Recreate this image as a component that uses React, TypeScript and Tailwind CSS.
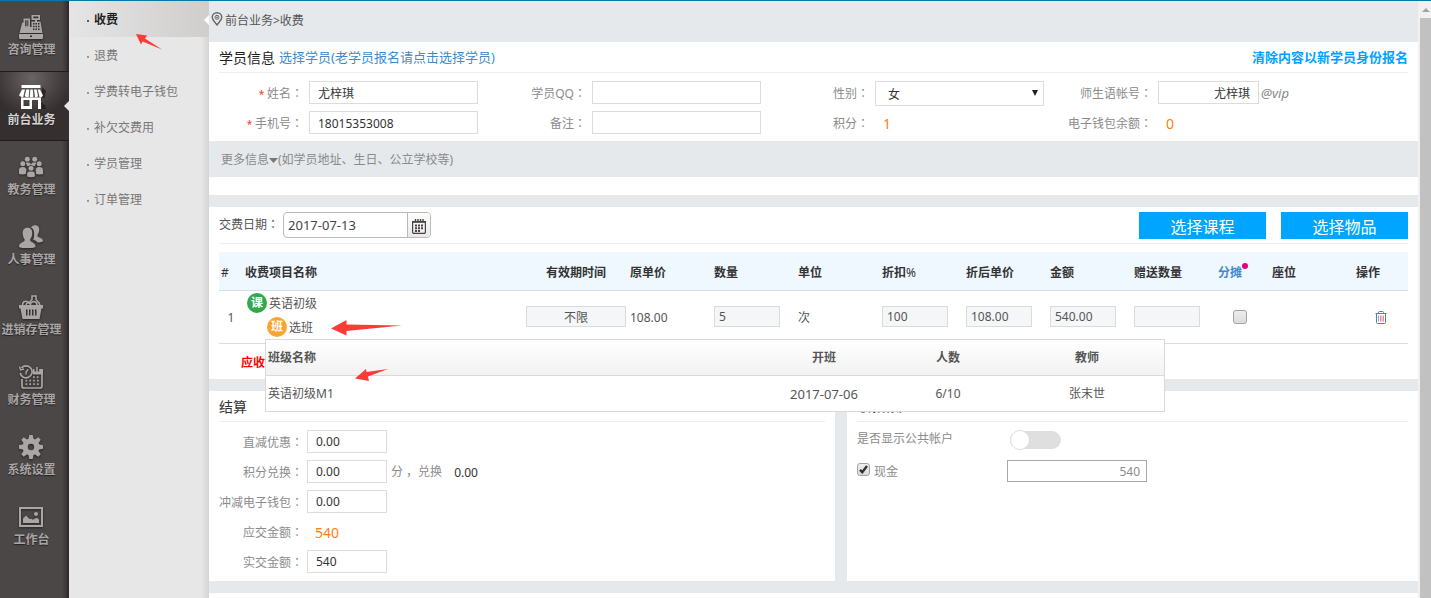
import type { ReactNode } from 'react';

const RegisterIcon = () => (
  <svg viewBox="0 0 24 24" className="size-6" fill="currentColor">
    <path fillRule="evenodd" d="M12.500 0H21v5h-3v2h-2V5h-3.500zM14.300 1.600v1.700h5V1.600z" />
    <path fillRule="evenodd" d="M4.500 3.500H11V12h1.500V6.500h9L23.500 18H.5L3.200 7.500h1.300zM6.200 5.200v6h1.300v-6zM8.300 5.200v6h1v-6zM14 8v1.500h1.500V8zM16.500 8v1.500H18V8zM19 8v1.500h1.500V8zM14 10.800v1.500h1.500v-1.500zM16.500 10.800v1.500H18v-1.500zM19 10.800v1.500h1.500v-1.500zM14 13.600v1.500h1.500v-1.500zM16.500 13.600v1.500H18v-1.500zM19 13.600v1.500h1.500v-1.500z" />
    <path fillRule="evenodd" d="M0 19h24v4a1 1 0 0 1-1 1H1a1 1 0 0 1-1-1zM11 20.500V22h2v-1.500z" />
  </svg>
);

const StoreIcon = () => (
  <svg viewBox="0 0 24 24" className="size-6 overflow-visible">
    <path d="M23 2l4 4-1.500 7-3 0v4l4 4v3h-4z" fill="#1f1a1a" opacity=".75" />
    <g fill="currentColor">
      <path d="M2.500 0h19v3h-19z" />
      <path d="M3 4.500h3L4.200 12H2.500L0 10.500zM7.300 4.500h3L9.700 12H7L5.700 11zM11.400 4.500h2.400l.6 7-1 .8h-2l-.7-.8zM15 4.500h2.700l1.300 6.500-1 1.200h-2zM18.800 4.500H21l3 6-1.500 1.700h-2z" />
      <path fillRule="evenodd" d="M2 12.500h20V24H2zM4.500 15h6v6h-6zM13 15h6v9h-6z" />
    </g>
  </svg>
);

const PeopleIcon = () => (
  <svg viewBox="0 0 24 24" className="size-6" fill="currentColor">
    <circle cx="8.300" cy="4.300" r="2.500" />
    <circle cx="15.700" cy="4.300" r="2.500" />
    <path d="M6.700 7.500h3.500l1.800 1.700 1.800-1.700h3.500l-1 2.500-.8 1.300-1.300-.3a3.400 3.400 0 0 0-4.400 0l-1.300.3-.8-1.300z" />
    <circle cx="3.800" cy="8.700" r="2.500" />
    <circle cx="20.200" cy="8.700" r="2.500" />
    <path d="M0 19v-3.500c0-2 1-3.500 3.800-3.500s3.300 1.500 3.500 3L6.800 19c-2 .6-5 .6-6.800 0zM24 19v-3.500c0-2-1-3.500-3.800-3.500s-3.300 1.500-3.500 3l.5 4c2 .6 5 .6 6.800 0z" />
    <circle cx="12" cy="13.200" r="2.500" />
    <path d="M8.200 21.500V19c0-2 1.200-2.500 3.800-2.500s3.800.5 3.800 2.500v2.500c-2 1-5.600 1-7.600 0z" />
  </svg>
);

const UsersIcon = () => (
  <svg viewBox="0 0 24 24" className="size-6" fill="currentColor">
    <path d="M12 2.500C13 1 14.300.3 16 .3c3.300 0 4.500 2.300 4.200 5.200-.2 2-.9 3.200-1.700 4.200v1.800l4 2c1.200.7 1.500 1.500 1.500 2.800-1 .8-3.500 1.200-5.500 1.300-.8-1.200-2-2-3.400-2.500l-1-.5c.8-1.200 1-2.800 1-4.700.4-3.500-.7-6.500-3.100-7.400z" />
    <path d="M8.500 2.800c3.700 0 5 2.600 4.700 6.100-.2 2.200-1 4-2 5.100v2l3.600 2.300c1.200.7 1.700 2 1.700 3.600-2.500 1.600-14 1.600-16.500 0 0-1.600.5-2.900 1.700-3.600L5.500 16v-2c-1-1.100-1.600-2.900-1.800-5.100-.3-3.500 1.100-6.100 4.800-6.100z" />
  </svg>
);

const BasketIcon = () => (
  <svg viewBox="0 0 24 24" className="size-6">
    <path d="M3.500 10c0-3 2.500-4.500 5-3.300L12 10M11 8.500V6.500l2-2V1h4v3.500l1.500 2c1.500 1 2.500 2 2.200 4" fill="none" stroke="currentColor" strokeWidth="1.600" />
    <path d="M7 10c.5-2.500 3-3.500 5-2 2-2.500 6-1.500 6 2.500" fill="none" stroke="currentColor" strokeWidth="1.600" />
    <path fill="currentColor" fillRule="evenodd" d="M0 10h24v3.500h-1.500L20.500 24h-17L1.500 13.500H0zM7 14.500v6h1.500v-6zM10 14.500v6h1.500v-6zM13 14.500v6h1.500v-6zM16 14.500v6h1.500v-6z" />
  </svg>
);

const ClockCalendarIcon = () => (
  <svg viewBox="0 0 24 24" className="size-6" fill="none" stroke="currentColor">
    <path strokeWidth="1.700" d="M3 14v7a2 2 0 0 0 2 2h16a2 2 0 0 0 2-2V6" />
    <path fill="currentColor" stroke="none" d="M14 4h1.500v2.500h1.700V2h1.500v4.500h1.500V4H24v5.500H14z" />
    <path d="M2.500 3A6 6 0 1 1 1.200 8" strokeWidth="1.700" />
    <path strokeWidth="1.400" d="M.5 1.500L1.500 5 5 4M7 9.500V7l2.200-2.700" />
    <path strokeWidth="1.700" strokeDasharray="1.700 2.100" d="M14 12.200h7M6.500 15.700h14M6.500 19.200h14" />
  </svg>
);

const TEETH = ['rotate(0 12 12)', 'rotate(45 12 12)', 'rotate(90 12 12)', 'rotate(135 12 12)', 'rotate(180 12 12)', 'rotate(225 12 12)', 'rotate(270 12 12)', 'rotate(315 12 12)'];

const GearIcon = () => (
  <svg viewBox="0 0 24 24" className="size-6" fill="currentColor">
    {TEETH.map((t) => (
      <path key={t} transform={t} d="M10.300 0h3.400l1 5h-5.400z" />
    ))}
    <path fillRule="evenodd" d="M12 3.500a8.500 8.500 0 1 0 0 17 8.500 8.500 0 0 0 0-17zm0 5.300a3.200 3.200 0 1 1 0 6.400 3.200 3.200 0 0 1 0-6.400z" />
  </svg>
);

const PictureIcon = () => (
  <svg viewBox="0 0 24 24" className="size-6" fill="currentColor">
    <path fillRule="evenodd" d="M0 2h24v20H0zM2 4v16h20V4z" />
    <path d="M4 18v-4.500L7 10.500l3.500 3.500 1.500-.3 2 1 3.500-2 2.500 1.800V18z" />
    <circle cx="17" cy="9" r="2" />
  </svg>
);

const PinIcon = () => (
  <svg viewBox="0 0 12 14" className="mt-px h-3.5 w-3 shrink-0" fill="none" stroke="#666">
    <path strokeWidth="1.400" d="M6 13C4.500 10.500 1.200 8.300 1.200 5.300a4.800 4.600 0 0 1 9.600 0C10.800 8.300 7.500 10.500 6 13z" />
    <circle cx="6" cy="5.300" r="2" />
    <circle cx="6" cy="5.300" r=".5" />
  </svg>
);

const CalendarIcon = () => (
  <svg viewBox="0 0 14 15" className="h-[15px] w-3.5" stroke="#4a4340">
    <path fill="none" strokeWidth="1.200" d="M.6 2.600h12.800v10.300a1.500 1.500 0 0 1-1.500 1.500H2.100a1.500 1.500 0 0 1-1.500-1.500z" />
    <path strokeWidth="1.400" d="M1 3h12M3.500 0v3M6 0v3M8.500 0v3M11 0v3" />
    <path stroke="none" fill="#4a4340" d="M6 5.500h2v2H6zM9 5.500h2v2H9zM3 5.500h2v2H3zM3 8.300h2v2H3zM6 8.300h2v2H6zM9 8.300h2v2H9zM3 11h2v2H3zM6 11h2v2H6z" />
  </svg>
);

const TrashIcon = () => (
  <svg viewBox="0 0 12 13" className="mt-0.5 h-[13px] w-3" fill="none">
    <path stroke="#3f86c0" d="M.5 2.500h11M3.500 2.500v-1a1 1 0 0 1 1-1h3a1 1 0 0 1 1 1v1M1.500 3v8.500a1 1 0 0 0 1 1h7a1 1 0 0 0 1-1V3" />
    <path stroke="#e58d98" d="M3.500 4.500v6M5.500 4.500v6M7 4.500v6M8.500 4.500v6" />
  </svg>
);

const NAV: { label: string; icon: ReactNode; active?: boolean }[] = [
  { label: '咨询管理', icon: <RegisterIcon /> },
  { label: '前台业务', icon: <StoreIcon />, active: true },
  { label: '教务管理', icon: <PeopleIcon /> },
  { label: '人事管理', icon: <UsersIcon /> },
  { label: '进销存管理', icon: <BasketIcon /> },
  { label: '财务管理', icon: <ClockCalendarIcon /> },
  { label: '系统设置', icon: <GearIcon /> },
  { label: '工作台', icon: <PictureIcon /> },
];

const SUBNAV = ['收费', '退费', '学费转电子钱包', '补欠交费用', '学员管理', '订单管理'];

const LABEL = 'w-[84px] shrink-0 text-right leading-6 whitespace-nowrap text-[#8c8c8c]';
const BOX = 'h-[23px] border border-[#dcdcdc] bg-white px-2 pt-px text-[#333] outline-none';
const CELL_BOX = 'block h-[21px] border border-[#d9dbdd] bg-[#f4f6f8] px-1 text-[#555] outline-none';

/* Full-width colon centred in its cell */
const Colon = () => <span className="font-['Noto_Sans_CJK_TC']" lang="zh-TW">：</span>;

const Required = () => <span className="text-[10px] text-[#f33]">* </span>;

function Sidebar() {
  return (
    <nav className="w-[69px] shrink-0 bg-[linear-gradient(to_right,#4b4747_62px,#403c3c_65px,#2a2727_69px)]">
      {NAV.map(({ label, icon, active }) => (
        <a
          key={label}
          href="#"
          className={
            active
              ? 'relative block h-[70px] border-y border-[#211d1d] bg-[radial-gradient(ellipse_40px_38px_at_32px_6px,#6b6464,#352f2f)] pt-[13px] text-[#d6d3d3]'
              : 'block h-[70px] pt-3.5 text-[#aaa6a6]'
          }
        >
          <span className={active ? 'flex w-[62px] justify-center text-white' : 'flex w-[62px] justify-center drop-shadow-[0_1px_1px_#222]'}>{icon}</span>
          <span className="block w-[63px] text-center leading-[22px] font-bold whitespace-nowrap [text-shadow:0_1px_1px_#222]">{label}</span>
          {active && (
            <svg viewBox="0 0 5 10" className="absolute top-[29px] right-0 h-2.5 w-[5px]" fill="#e6e5e5">
              <path d="M5 0v10L0 5z" />
            </svg>
          )}
        </a>
      ))}
    </nav>
  );
}

function SubMenu() {
  return (
    <nav className="relative w-[140px] shrink-0 bg-[linear-gradient(to_right,#e8e7e7_132px,#d5d4d4_140px)]">
      {SUBNAV.map((label, i) => (
        <a
          key={label}
          href="#"
          className={
            i === 0
              ? 'relative flex h-9 items-center gap-[5px] bg-[linear-gradient(to_right,#e6e5e5,#cfcecd)] pt-0.5 pl-[18px] font-bold text-[#222]'
              : 'flex h-9 items-center gap-[5px] pt-0.5 pl-[18px] text-[#777]'
          }
        >
          <span className="mt-0.5 size-0.5 bg-current opacity-70" />
          {label}
          {i === 0 && (
            <svg viewBox="0 0 5 10" className="absolute top-3.5 right-0 h-2.5 w-[5px]" fill="#fff">
              <path d="M5 0v10L0 5z" />
            </svg>
          )}
        </a>
      ))}
      <svg viewBox="0 0 27 16" className="absolute top-[33px] left-[67px] h-4 w-[27px]" fill="#fb3b36">
        <path d="M0 0l11 1.500-2 3L26 15.500 6.500 7.500 5 10.500z" />
      </svg>
    </nav>
  );
}

function StudentPanel() {
  return (
    <section>
      <div className="bg-white px-2.5">
        <div className="flex h-[31px] items-center gap-1 border-b border-[#eee] pt-px">
          <h2 className="text-[14px] text-[#222]">学员信息</h2>
          <a href="#" className="pt-px text-[13px] text-[#428bca]">选择学员(老学员报名请点击选择学员)</a>
          <a href="#" className="ml-auto text-[13px] font-bold text-[#00a2ff]">清除内容以新学员身份报名</a>
        </div>
        <div className="grid auto-rows-[30px] grid-cols-4 pt-2 pr-[57px]">
          <div className="flex gap-1.5">
            <label htmlFor="name" className={LABEL}><Required />姓名<Colon /></label>
            <input id="name" defaultValue="尤梓琪" className={`${BOX} w-[169px]`} />
          </div>
          <div className="flex gap-1.5">
            <label htmlFor="qq" className={LABEL}>学员QQ<Colon /></label>
            <input id="qq" className={`${BOX} w-[169px]`} />
          </div>
          <div className="flex gap-1.5">
            <label htmlFor="gender" className={LABEL}>性别<Colon /></label>
            <div className="grid w-[169px] shrink-0">
              <select id="gender" defaultValue="女" className="col-start-1 row-start-1 h-[25px] appearance-none border border-[#dcdcdc] bg-white px-3 pt-0.5 text-[#333] outline-none">
                <option>女</option>
                <option>男</option>
              </select>
              <svg viewBox="0 0 6 6" className="pointer-events-none col-start-1 row-start-1 mt-[9px] mr-[6px] size-1.5 justify-self-end" fill="#222">
                <path d="M0 0h6L3 6z" />
              </svg>
            </div>
          </div>
          <div className="flex gap-1.5">
            <label htmlFor="account" className={LABEL}>师生语帐号<Colon /></label>
            <input id="account" defaultValue="尤梓琪" className={`${BOX} w-[101px] shrink-0 text-right`} />
            <span className="-ml-1 text-[13px] leading-6 text-[#888] italic">@vip</span>
          </div>
          <div className="flex gap-1.5">
            <label htmlFor="phone" className={LABEL}><Required />手机号<Colon /></label>
            <input id="phone" defaultValue="18015353008" className={`${BOX} w-[169px]`} />
          </div>
          <div className="flex gap-1.5">
            <label htmlFor="remark" className={LABEL}>备注<Colon /></label>
            <input id="remark" className={`${BOX} w-[169px]`} />
          </div>
          <div className="flex gap-1.5">
            <span className={LABEL}>积分<Colon /></span>
            <span className="pl-2 text-[14px] leading-[26px] text-[#ff7f0e]">1</span>
          </div>
          <div className="flex gap-1.5">
            <span className={LABEL}>电子钱包余额<Colon /></span>
            <span className="pl-2 text-[14px] leading-[26px] text-[#ff7f0e]">0</span>
          </div>
        </div>
      </div>
      <button type="button" className="flex h-9 w-full items-center px-3 pt-0.5 text-[#8a8a8a]">
        更多信息
        <svg viewBox="0 0 9 5" className="h-[5px] w-[9px]" fill="#777"><path d="M0 0h9L4.500 5z" /></svg>
        (如学员地址、生日、公立学校等)
      </button>
      <div className="h-[18px] bg-white" />
    </section>
  );
}

function ClassPopup() {
  return (
    <div className="absolute top-full left-0 z-10 w-[900px] border border-[#d9d9d9] bg-white">
      <table className="w-full table-fixed border-collapse text-[#555]">
        <colgroup>
          <col />
          <col className="w-[124px]" />
          <col className="w-[124px]" />
          <col className="w-[154px]" />
        </colgroup>
        <thead>
          <tr className="h-9 border-b border-[#d9d9d9] bg-linear-to-b from-white to-[#f2f2f2] [&>th]:pt-0.5">
            <th className="px-0.5 text-left">班级名称</th>
            <th>开班</th>
            <th>人数</th>
            <th>教师</th>
          </tr>
        </thead>
        <tbody>
          <tr className="h-[35px] text-center [&>td]:pt-0.5">
            <td className="px-0.5 text-left">英语初级M1</td>
            <td className="text-[13px]">2017-07-06</td>
            <td>6/10</td>
            <td>张末世</td>
          </tr>
        </tbody>
      </table>
      <svg viewBox="0 0 71 16" className="absolute -top-[20px] left-[65px] h-4 w-[71px]" fill="#fb3b36">
        <path d="M0 8.500L15.500 0v4.500L71 5.500 15.500 11v4.500z" />
      </svg>
      <svg viewBox="0 0 33 12" className="absolute top-[29px] left-[89px] h-3 w-[33px]" fill="#fb3b36">
        <path d="M0 9.500L11 0l.5 3L33 0 13 7.500 14 12z" />
      </svg>
    </div>
  );
}

function FeePanel() {
  return (
    <section className="bg-white px-2.5">
      <div className="flex h-[37px] items-start gap-1 border-b border-[#eee] pt-[5px]">
        <label htmlFor="date" className="leading-6 text-[#555]">交费日期<Colon /></label>
        <div className="flex h-[26px] w-[148px] overflow-hidden rounded-[4px] border border-[#bbb]">
          <input id="date" defaultValue="2017-07-13" className="w-[123px] px-1 pt-0.5 text-[13px] text-[#444] outline-none" />
          <button type="button" aria-label="选择日期" className="grid flex-1 place-items-center border-l border-[#bbb] bg-linear-to-b from-white to-[#e8e8e8] pt-0.5">
            <CalendarIcon />
          </button>
        </div>
        <button type="button" className="ml-auto h-[27px] w-[127px] bg-[#00a5ff] pt-0.5 text-[16px] text-white">选择课程</button>
        <button type="button" className="ml-[11px] h-[27px] w-[127px] bg-[#00a5ff] pt-0.5 text-[16px] text-white">选择物品</button>
      </div>
      <table className="mt-2 w-full table-fixed border-collapse text-[#555]">
        <colgroup>
          <col className="w-6" />
          <col />
          <col className="w-[104px]" />
          <col className="w-[84px]" />
          <col className="w-[84px]" />
          <col className="w-[84px]" />
          <col className="w-[84px]" />
          <col className="w-[84px]" />
          <col className="w-[84px]" />
          <col className="w-[84px]" />
          <col className="w-[54px]" />
          <col className="w-[84px]" />
          <col className="w-[54px]" />
        </colgroup>
        <thead>
          <tr className="h-[38px] border-b border-[#cfe0ea] bg-[#eff7ff] text-left text-[#333] [&>th]:px-0.5 [&>th]:pt-1">
            <th className="font-normal">#</th>
            <th>收费项目名称</th>
            <th className="text-center">有效期时间</th>
            <th>原单价</th>
            <th>数量</th>
            <th>单位</th>
            <th>折扣<span className="font-normal">%</span></th>
            <th>折后单价</th>
            <th>金额</th>
            <th>赠送数量</th>
            <th>
              <a href="#" className="relative text-[#428bca]">
                分摊
                <span className="absolute top-[-1px] left-full size-1.5 rounded-full bg-[#e5007d]" />
              </a>
            </th>
            <th>座位</th>
            <th>操作</th>
          </tr>
        </thead>
        <tbody>
          <tr className="h-[53px] border-b border-[#ddd] [&>td]:px-0.5">
            <td className="pt-0.5 text-center">1</td>
            <td className="align-top">
              <div className="flex h-6 items-center gap-0.5 pl-0.5">
                <span className="grid size-5 place-items-center rounded-full bg-[#32a84a] pt-px font-bold text-white">课</span>
                <span className="pt-0.5">英语初级</span>
              </div>
              <div className="relative ml-5 flex h-6 items-center gap-0.5 pl-0.5">
                <span className="grid size-5 place-items-center rounded-full bg-[#fba52f] pt-px font-bold text-white">班</span>
                <a href="#" className="pt-0.5">选班</a>
                <ClassPopup />
              </div>
            </td>
            <td><input aria-label="有效期时间" defaultValue="不限" className={`${CELL_BOX} w-full text-center`} /></td>
            <td className="pt-0.5">108.00</td>
            <td><input aria-label="数量" defaultValue="5" className={`${CELL_BOX} w-[66px]`} /></td>
            <td className="pt-0.5">次</td>
            <td><input aria-label="折扣%" defaultValue="100" className={`${CELL_BOX} w-[66px]`} /></td>
            <td><input aria-label="折后单价" defaultValue="108.00" className={`${CELL_BOX} w-[66px]`} /></td>
            <td><input aria-label="金额" defaultValue="540.00" className={`${CELL_BOX} w-[66px]`} /></td>
            <td><input aria-label="赠送数量" className={`${CELL_BOX} w-[66px]`} /></td>
            <td>
              <input type="checkbox" aria-label="分摊" className="ml-[15px] block size-3.5 appearance-none rounded-[3px] border border-[#a3a3a3] bg-linear-to-b from-[#eee] to-[#dcdcdc]" />
            </td>
            <td />
            <td>
              <button type="button" aria-label="删除" className="mx-auto block"><TrashIcon /></button>
            </td>
          </tr>
        </tbody>
      </table>
      <div className="flex h-[35px] items-center pt-1 pl-[22px] font-bold text-[#f00]">应收</div>
    </section>
  );
}

function Amount({ id, label, value, children }: { id: string; label: string; value: string; children?: ReactNode }) {
  return (
    <div className="flex h-[30px] gap-1">
      <label htmlFor={id} className={LABEL}>{label}<Colon /></label>
      <input id={id} defaultValue={value} className={`${BOX} w-20`} />
      {children}
    </div>
  );
}

function SettlementPanels() {
  return (
    <div className="flex gap-3">
      <section className="w-[626px] bg-white px-2.5 pb-px">
        <h2 className="flex h-[31px] items-center border-b border-[#eee] pt-0.5 text-[14px] text-[#333]">结算</h2>
        <div className="pt-2">
          <Amount id="cut" label="直减优惠" value="0.00" />
          <Amount id="points" label="积分兑换" value="0.00">
            <span className="leading-6 text-[#8c8c8c]">分 ，兑换</span>
            <span className="pl-2 leading-[26px] text-[#333]">0.00</span>
          </Amount>
          <Amount id="wallet" label="冲减电子钱包" value="0.00" />
          <div className="flex h-[30px] gap-1">
            <span className={LABEL}>应交金额<Colon /></span>
            <span className="pl-2 text-[14px] leading-[26px] text-[#ff7f0e]">540</span>
          </div>
          <Amount id="paid" label="实交金额" value="540" />
        </div>
      </section>
      <section className="flex-1 bg-white px-2.5">
        <h2 className="flex h-[31px] items-center border-b border-[#eee] text-[14px] text-[#333]">收款帐户</h2>
        <div className="grid auto-rows-[30px] grid-cols-[150px_1fr] pt-2 text-[#8c8c8c]">
          <label htmlFor="public" className="leading-[18px]">是否显示公共帐户</label>
          <input
            id="public"
            type="checkbox"
            role="switch"
            className="mt-px ml-[3px] flex h-[18px] w-[51px] appearance-none items-center rounded-full bg-[#dfdfdf] before:size-5 before:shrink-0 before:rounded-full before:border before:border-[#ddd] before:bg-white"
          />
          <div className="flex gap-1">
            <span className="mt-[3px] grid size-[13px] place-items-center">
              <input id="cash" type="checkbox" defaultChecked className="col-start-1 row-start-1 size-[13px] appearance-none rounded-[3px] border border-[#a3a3a3] bg-linear-to-b from-[#eee] to-[#dcdcdc]" />
              <svg viewBox="0 0 9 9" className="pointer-events-none col-start-1 row-start-1 size-[9px]" fill="none" stroke="#333" strokeWidth="2.400">
                <path d="M1 4.800L3.300 7.200 8 1" />
              </svg>
            </span>
            <label htmlFor="cash" className="leading-6">现金</label>
          </div>
          <input aria-label="现金金额" defaultValue="540" className="h-[22px] w-[140px] border border-[#a9a9a9] px-1.5 pt-px text-right text-[#8c8c8c] outline-none" />
        </div>
      </section>
    </div>
  );
}

export default function App() {
  return (
    <div className="flex min-h-screen flex-col border-t border-[#007cab] bg-[#e5e9ec] font-['Noto_Sans','Noto_Sans_CJK_SC',sans-serif] text-[12px]">
      <div className="flex flex-1">
        <Sidebar />
        <SubMenu />
        <main className="flex min-w-0 flex-1 flex-col">
          <div className="flex h-[41px] items-start gap-0.5 px-0.5 pt-2.5 text-[#555]">
            <PinIcon />
            <span className="leading-5">前台业务&gt;收费</span>
          </div>
          <div className="flex flex-1 flex-col gap-3">
            <StudentPanel />
            <FeePanel />
            <SettlementPanels />
            <div className="flex-1 bg-white" />
          </div>
        </main>
        <div aria-hidden="true" className="flex w-[13px] shrink-0 flex-col bg-[#f1f1f1] pl-0.5">
          <div className="flex h-[17px] items-center justify-center">
            <svg viewBox="0 0 8 4" className="h-1 w-2" fill="#a3a3a3"><path d="M0 4h8L4 0z" /></svg>
          </div>
          <div className="flex-1 bg-[#c1c1c1]" />
        </div>
      </div>
    </div>
  );
}
